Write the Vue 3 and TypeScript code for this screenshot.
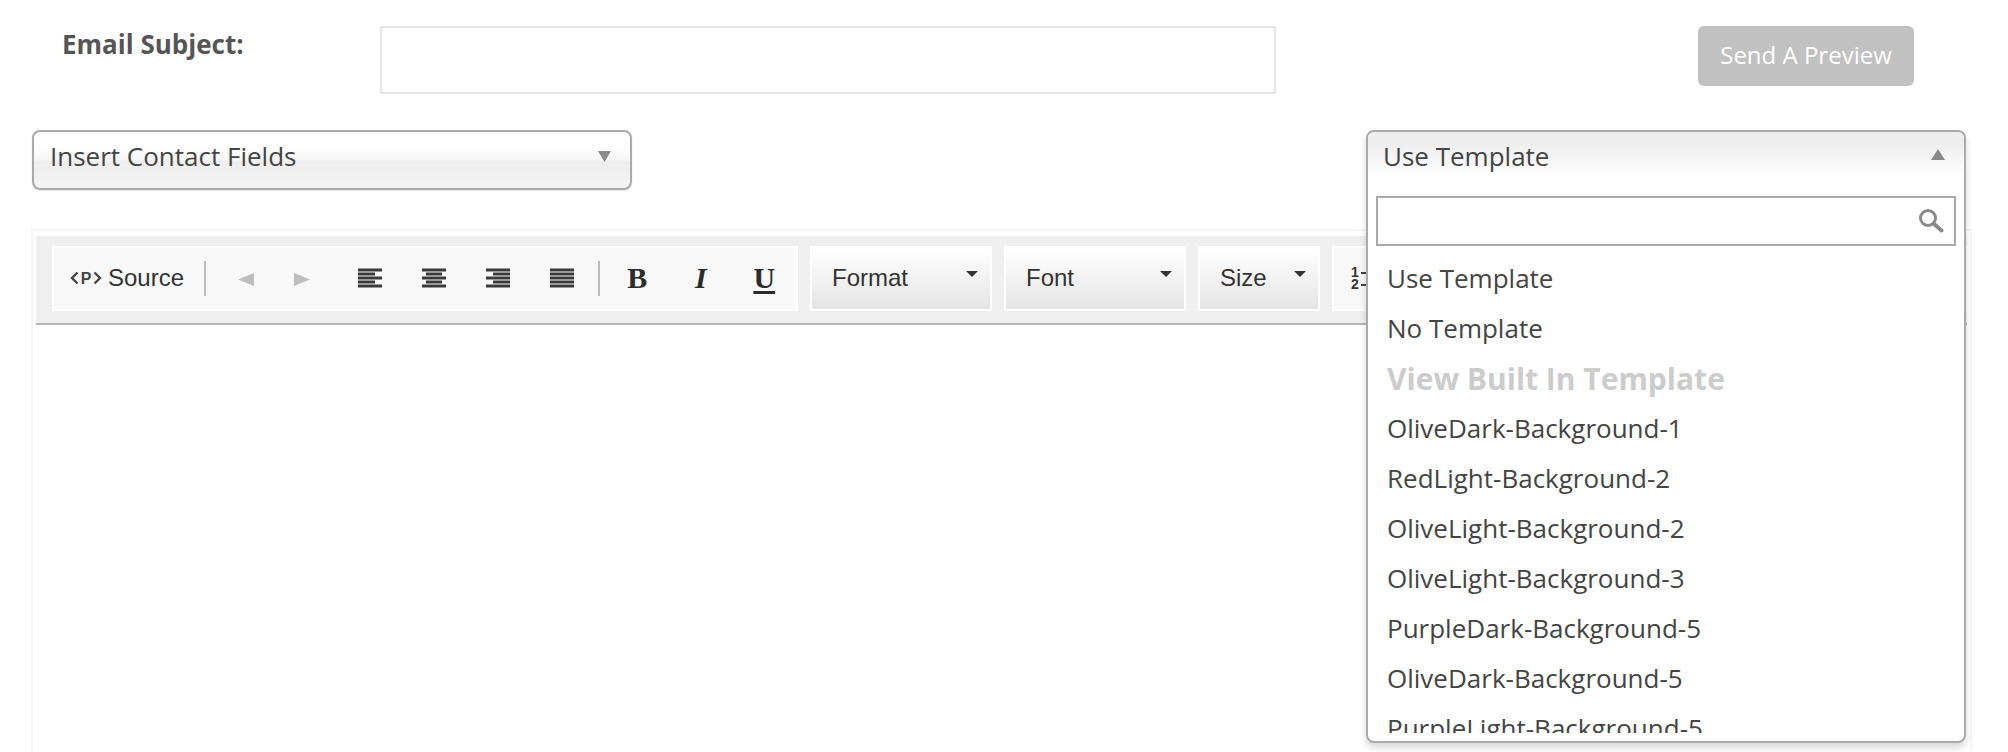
<script setup lang="ts">
const templates = [
  'OliveDark-Background-1',
  'RedLight-Background-2',
  'OliveLight-Background-2',
  'OliveLight-Background-3',
  'PurpleDark-Background-5',
  'OliveDark-Background-5',
  'PurpleLight-Background-5',
]

// lines of the four align icons: [x offset, width] per row
const alignIcons: [number, number][][] = [
  [[0, 24], [0, 17], [0, 24], [0, 17], [0, 24]],
  [[0, 24], [4, 16], [0, 24], [4, 16], [0, 24]],
  [[0, 24], [7, 17], [0, 24], [7, 17], [0, 24]],
  [[0, 24], [0, 24], [0, 24], [0, 24], [0, 24]],
]

const combos = [
  { label: 'Format', cls: 'combo-format' },
  { label: 'Font', cls: 'combo-font' },
  { label: 'Size', cls: 'combo-size' },
]
</script>

<template>
  <div class="page">
    <div class="subject-row">
      <label class="subject-label">Email Subject:</label>
      <input class="subject-input" type="text" />
      <button class="preview-btn" type="button">Send A Preview</button>
    </div>

    <div class="select-row">
      <div class="chosen">
        <span>Insert Contact Fields</span>
        <svg class="caret" width="13" height="11" viewBox="0 0 13 11"><path d="M0 0h13L6.5 11z" fill="#8a8a8a" /></svg>
      </div>

      <div class="chosen-wrap">
        <div class="drop">
          <div class="drop-head">
            <span>Use Template</span>
            <svg class="caret-up" width="14" height="11" viewBox="0 0 14 11"><path d="M0 11h14L7 0z" fill="#8a8a8a" /></svg>
          </div>
          <div class="drop-search">
            <input type="text" />
            <svg class="search-icon" width="26" height="25" viewBox="0 0 26 25">
              <circle cx="10" cy="9" r="7.5" fill="none" stroke="#8a8a8a" stroke-width="3" />
              <path d="M15.5 14.5L23.5 21.5" stroke="#8a8a8a" stroke-width="4" stroke-linecap="round" />
            </svg>
          </div>
          <ul class="drop-list">
            <li>Use Template</li>
            <li>No Template</li>
            <li class="group">View Built In Template</li>
            <li v-for="t in templates" :key="t">{{ t }}</li>
          </ul>
        </div>
      </div>
    </div>

    <div class="editor">
      <div class="toolbar">
        <div class="tb-group tb-main">
          <div class="source-btn">
            <svg width="32" height="14" viewBox="0 0 32 14">
              <path d="M7.5 1.5L2 7l5.5 5.5M24.5 1.5L30 7l-5.5 5.5" fill="none" stroke="#444" stroke-width="2.4" />
              <text x="16" y="12.5" text-anchor="middle" class="p-glyph">P</text>
            </svg>
            <span>Source</span>
          </div>
          <i class="tb-sep"></i>
          <div class="tb-btn tb-undo">
            <svg width="16" height="13" viewBox="0 0 16 13"><path d="M16 0v13L0 6.5z" fill="#bdbdbd" /></svg>
          </div>
          <div class="tb-btn tb-redo">
            <svg width="16" height="13" viewBox="0 0 16 13"><path d="M0 0v13l16-6.5z" fill="#bdbdbd" /></svg>
          </div>
          <div v-for="(rows, i) in alignIcons" :key="i" class="tb-btn tb-align">
            <svg width="24" height="20" viewBox="0 0 24 20">
              <rect v-for="(r, j) in rows" :key="j" :x="r[0]" :y="j * 4 + 0.5" :width="r[1]" height="3" fill="#3a3a3a" />
            </svg>
          </div>
          <i class="tb-sep tb-sep2"></i>
          <div class="tb-btn tb-style tb-b">B</div>
          <div class="tb-btn tb-style tb-i">I</div>
          <div class="tb-btn tb-style tb-u">U</div>
        </div>

        <div v-for="c in combos" :key="c.label" class="combo" :class="c.cls">
          <span>{{ c.label }}</span>
          <svg width="12" height="6" viewBox="0 0 12 6"><path d="M0 0h12L6 6z" fill="#333" /></svg>
        </div>

        <div class="tb-group tb-rest">
          <svg class="num-icon" width="24" height="24" viewBox="0 0 24 24">
            <text x="4" y="10" text-anchor="middle" class="num-glyph">1</text>
            <text x="4" y="22" text-anchor="middle" class="num-glyph">2</text>
            <rect x="10" y="5" width="8" height="2" fill="#444" />
            <rect x="10" y="17" width="8" height="2" fill="#444" />
          </svg>
        </div>
      </div>
    </div>
  </div>
</template>

<style scoped>
.page {
  height: 752px;
  overflow: hidden;
  background: #fff;
  font-family: "Open Sans", sans-serif;
  color: #444;
}

.subject-row {
  display: flex;
  align-items: flex-start;
  padding: 26px 0 0 62px;
}

.subject-label {
  width: 318px;
  font-size: 26px;
  line-height: 36px;
  font-weight: 700;
  color: #555;
}

.subject-input {
  box-sizing: border-box;
  width: 896px;
  height: 68px;
  border: 2px solid #e6e6e6;
  background: #fff;
  outline: none;
}

.preview-btn {
  box-sizing: border-box;
  width: 216px;
  height: 60px;
  margin-left: 422px;
  padding: 0 0 4px;
  border: none;
  border-radius: 6px;
  background: #c1c1c1;
  color: #fff;
  font-family: "Open Sans", sans-serif;
  font-size: 24px;
}

.select-row {
  display: flex;
  justify-content: space-between;
  width: 1934px;
  margin: 36px 0 0 32px;
}

.chosen {
  box-sizing: border-box;
  width: 600px;
  height: 60px;
  position: relative;
  padding: 0 16px;
  border: 2px solid #aaa;
  border-radius: 8px;
  background: linear-gradient(#fff 20%, #f6f6f6 50%, #eee 52%, #f4f4f4 100%);
  box-shadow: 0 1px 2px rgba(0, 0, 0, 0.1);
  font-size: 26px;
  line-height: 48px;
}

.caret {
  position: absolute;
  right: 19px;
  top: 19px;
}

.chosen-wrap {
  position: relative;
  width: 600px;
  height: 60px;
}

.drop {
  position: absolute;
  z-index: 5;
  top: 0;
  left: 0;
  box-sizing: border-box;
  width: 600px;
  height: 613px;
  border: 2px solid #aaa;
  border-radius: 8px;
  background: #fff;
  box-shadow: 0 5px 7px rgba(0, 0, 0, 0.15);
}

.drop-head {
  position: relative;
  height: 56px;
  padding: 0 15px;
  border-radius: 6px 6px 0 0;
  background: linear-gradient(#eee 20%, #fff 80%);
  font-size: 26px;
  line-height: 48px;
}

.caret-up {
  position: absolute;
  right: 19px;
  top: 17px;
}

.drop-search {
  position: relative;
  margin: 8px 8px 0;
}

.drop-search input {
  display: block;
  box-sizing: border-box;
  width: 100%;
  height: 50px;
  border: 2px solid #aaa;
  background: #fff;
  outline: none;
}

.search-icon {
  position: absolute;
  right: 12px;
  top: 13px;
}

.drop-list {
  list-style: none;
  margin: 7px 0 0;
  padding: 0 0 0 19px;
  height: 480px;
  overflow: hidden;
}

.drop-list li {
  height: 50px;
  line-height: 50px;
  font-size: 26px;
  color: #444;
  white-space: nowrap;
}

.drop-list li.group {
  font-size: 30px;
  line-height: 52px;
  font-weight: 700;
  color: #ccc;
}

.editor {
  box-sizing: border-box;
  width: 1941px;
  height: 600px;
  margin: 39px 0 0 31px;
  border: 2px solid #f5f5f5;
  padding: 5px 3px 0;
}

.toolbar {
  display: flex;
  gap: 12px;
  box-sizing: border-box;
  height: 89px;
  padding: 10px 0 0 16px;
  overflow: hidden;
  background: #efefef;
  border-bottom: 2px solid #b6b6b6;
  font-family: "Liberation Sans", Arial, sans-serif;
  color: #333;
}

.tb-group {
  display: flex;
  align-items: center;
  box-sizing: border-box;
  height: 65px;
  border: 2px solid #fff;
  background: #f8f8f8;
}

.tb-main {
  flex: none;
  width: 746px;
}

.tb-rest {
  flex: none;
  width: 640px;
  padding-left: 17px;
  align-items: flex-start;
}

.source-btn {
  display: flex;
  align-items: center;
  gap: 6px;
  width: 150px;
  padding-left: 16px;
  box-sizing: border-box;
  font-size: 24px;
  height: 40px;
  margin-top: -2px;
}

.source-btn svg {
  flex: none;
}

.p-glyph {
  font: 700 16px "Liberation Sans", Arial, sans-serif;
  fill: #444;
}

.tb-sep {
  flex: none;
  width: 2px;
  height: 35px;
  margin-top: -1px;
  background: #bcbcbc;
}

.tb-btn {
  flex: none;
  display: flex;
  align-items: center;
  justify-content: center;
  height: 40px;
  margin-top: -2px;
}

.tb-undo {
  width: 55px;
  margin-left: 12.5px;
  margin-top: 2px;
}

.tb-redo {
  width: 56px;
  margin-top: 2px;
}

.tb-align {
  width: 64px;
}

.tb-undo + .tb-redo + .tb-align {
  margin-left: 8px;
}

.tb-sep2 {
  margin-left: 4px;
}

.tb-style {
  width: 63.5px;
  font-family: "Liberation Serif", serif;
  font-size: 30px;
  color: #2b2b2b;
}

.tb-sep2 + .tb-style {
  margin-left: 6px;
}

.tb-b {
  font-weight: 700;
}

.tb-i {
  font-weight: 700;
  font-style: italic;
}

.tb-u {
  font-weight: 700;
  text-decoration: underline;
  text-underline-offset: 3px;
}

.combo {
  flex: none;
  display: flex;
  align-items: center;
  justify-content: space-between;
  box-sizing: border-box;
  height: 65px;
  padding: 0 12px 2px 20px;
  border: 2px solid #fff;
  background: linear-gradient(#fff, #e4e4e4);
  font-size: 24px;
  color: #333;
}

.combo svg {
  margin-top: -8px;
}

.combo-format {
  width: 182px;
}

.combo-font {
  width: 182px;
}

.combo-size {
  width: 122px;
}

.num-icon {
  margin-top: 19px;
}

.num-glyph {
  font: 700 14px "Liberation Sans", Arial, sans-serif;
  fill: #333;
}
</style>

<style>
html,
body {
  margin: 0;
  overflow: hidden;
}
</style>
